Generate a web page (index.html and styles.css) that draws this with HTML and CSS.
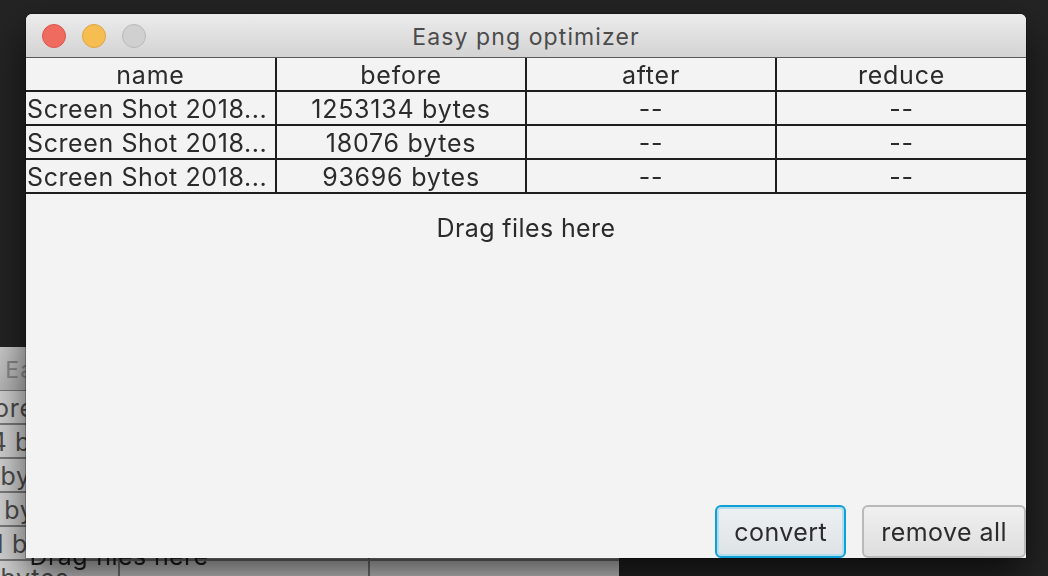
FILE: index.html
```html
<!DOCTYPE html>
<html>
<head>
<meta charset="utf-8">
<title>Easy png optimizer</title>
<link rel="stylesheet" href="styles.css">
</head>
<body>
<div class="desktop">
  <div class="window ghost">
    <div class="titlebar">
      <div class="lights"><span class="light"></span><span class="light"></span><span class="light"></span></div>
      <div class="title">Easy png optimizer</div>
    </div>
    <div class="content">
      <div class="table">
        <div class="cell head">name</div><div class="cell head">before</div><div class="cell head">after</div><div class="cell head">reduce</div>
        <div class="cell name">Screen Shot 2018...</div><div class="cell">1253134 bytes</div><div class="cell">--</div><div class="cell">--</div>
        <div class="cell name">Screen Shot 2018...</div><div class="cell">18076 bytes</div><div class="cell">--</div><div class="cell">--</div>
        <div class="cell name">Screen Shot 2018...</div><div class="cell">93696 bytes</div><div class="cell">--</div><div class="cell">--</div>
        <div class="cell name">Screen Shot 2018...</div><div class="cell">1253131 bytes</div><div class="cell">--</div><div class="cell">--</div>
        <div class="cell name">Screen Shot 2018...</div><div class="cell">18076 bytes</div><div class="cell">--</div><div class="cell">--</div>
      </div>
      <div class="overlay-label">Drag files here</div>
    </div>
  </div>

  <div class="window main">
    <div class="titlebar">
      <div class="lights">
        <span class="light red"></span><span class="light yellow"></span><span class="light gray"></span>
      </div>
      <div class="title">Easy png optimizer</div>
    </div>
    <div class="content">
      <div class="table">
        <div class="cell head">name</div><div class="cell head">before</div><div class="cell head">after</div><div class="cell head">reduce</div>
        <div class="cell name">Screen Shot 2018...</div><div class="cell">1253134 bytes</div><div class="cell">--</div><div class="cell">--</div>
        <div class="cell name">Screen Shot 2018...</div><div class="cell">18076 bytes</div><div class="cell">--</div><div class="cell">--</div>
        <div class="cell name">Screen Shot 2018...</div><div class="cell">93696 bytes</div><div class="cell">--</div><div class="cell">--</div>
      </div>
      <div class="drop">Drag files here</div>
      <div class="actions">
        <button class="btn focused">convert</button>
        <button class="btn">remove all</button>
      </div>
    </div>
  </div>
</div>
</body>
</html>
```

FILE: styles.css
```css
* { box-sizing: border-box; }
html, body { margin: 0; padding: 0; }
body {
  background: #242424;
  font-family: Inter, "Liberation Sans", Arial, sans-serif;
  color: #2b2b2b;
}
.desktop {
  position: relative;
  width: 1048px;
  height: 576px;
  overflow: hidden;
  background: #242424;
}
.window {
  position: absolute;
  width: 1000px;
  height: 544px;
  display: flex;
  flex-direction: column;
  background: #f3f3f3;
  border-radius: 6px 6px 0 0;
  overflow: hidden;
}
.main {
  left: 26px;
  top: 14px;
  box-shadow: 0 0 0 1px rgba(0,0,0,0.25), 0 18px 40px rgba(0,0,0,0.65);
}
.ghost {
  left: -381px;
  top: 347px;
  opacity: 0.85;
}
.titlebar {
  position: relative;
  height: 44px;
  flex: none;
  display: flex;
  align-items: center;
  justify-content: center;
  background: linear-gradient(#ececec, #d3d3d3);
  border-bottom: 1px solid #5a5a5a;
}
.ghost .titlebar { border-bottom-color: #8a8a8a; }
.lights {
  position: absolute;
  left: 16px;
  top: 10px;
  display: flex;
  gap: 16px;
}
.light {
  width: 24px;
  height: 24px;
  border-radius: 50%;
  background: #d2d2d2;
  border: 1px solid #bdbdbd;
}
.light.red { background: #ef6b60; border-color: #dc554b; }
.light.yellow { background: #f6be50; border-color: #dea443; }
.light.gray { background: #d0d0d0; border-color: #b9b9b9; }
.title {
  font-size: 23px;
  color: #4b4b4b;
  letter-spacing: 1.1px;
  padding-top: 2px;
}
.ghost .title { color: #9d9d9d; }
.content {
  position: relative;
  flex: 1;
  display: flex;
  flex-direction: column;
}
.table {
  display: grid;
  grid-template-columns: 251px 250px 250px 1fr;
  flex: none;
}
.cell {
  height: 34px;
  line-height: 32px;
  font-size: 25px;
  letter-spacing: 0.75px;
  text-align: center;
  border-bottom: 2px solid #1e1e1e;
  border-right: 2px solid #1e1e1e;
  white-space: nowrap;
  overflow: hidden;
  padding-top: 1px;
}
.cell:nth-child(4n) { border-right: none; }
.cell.name { text-align: left; padding-left: 1px; letter-spacing: 0.6px; }
.ghost .cell { border-color: #8c8c8c; color: #555; }
.drop {
  text-align: center;
  font-size: 25px;
  letter-spacing: 0.4px;
  padding-top: 19px;
  flex: 1;
}
.overlay-label {
  position: absolute;
  left: 0;
  right: 0;
  top: 150px;
  text-align: center;
  font-size: 25px;
  letter-spacing: 0.4px;
  color: #222;
}
.actions {
  display: flex;
  justify-content: flex-end;
  gap: 16px;
  flex: none;
}
.btn {
  font-family: inherit;
  font-size: 25px;
  letter-spacing: 0.45px;
  color: #2b2b2b;
  height: 53px;
  padding: 0 17px;
  border: 2px solid #b9b9b9;
  border-radius: 6px;
  background: linear-gradient(#f0f0f0, #dedede);
}
.btn.focused {
  border-color: #0fa0d6;
  box-shadow: inset 0 0 0 2px #b4dcef;
  background: linear-gradient(#eef1f3, #dde2e5);
}
```
